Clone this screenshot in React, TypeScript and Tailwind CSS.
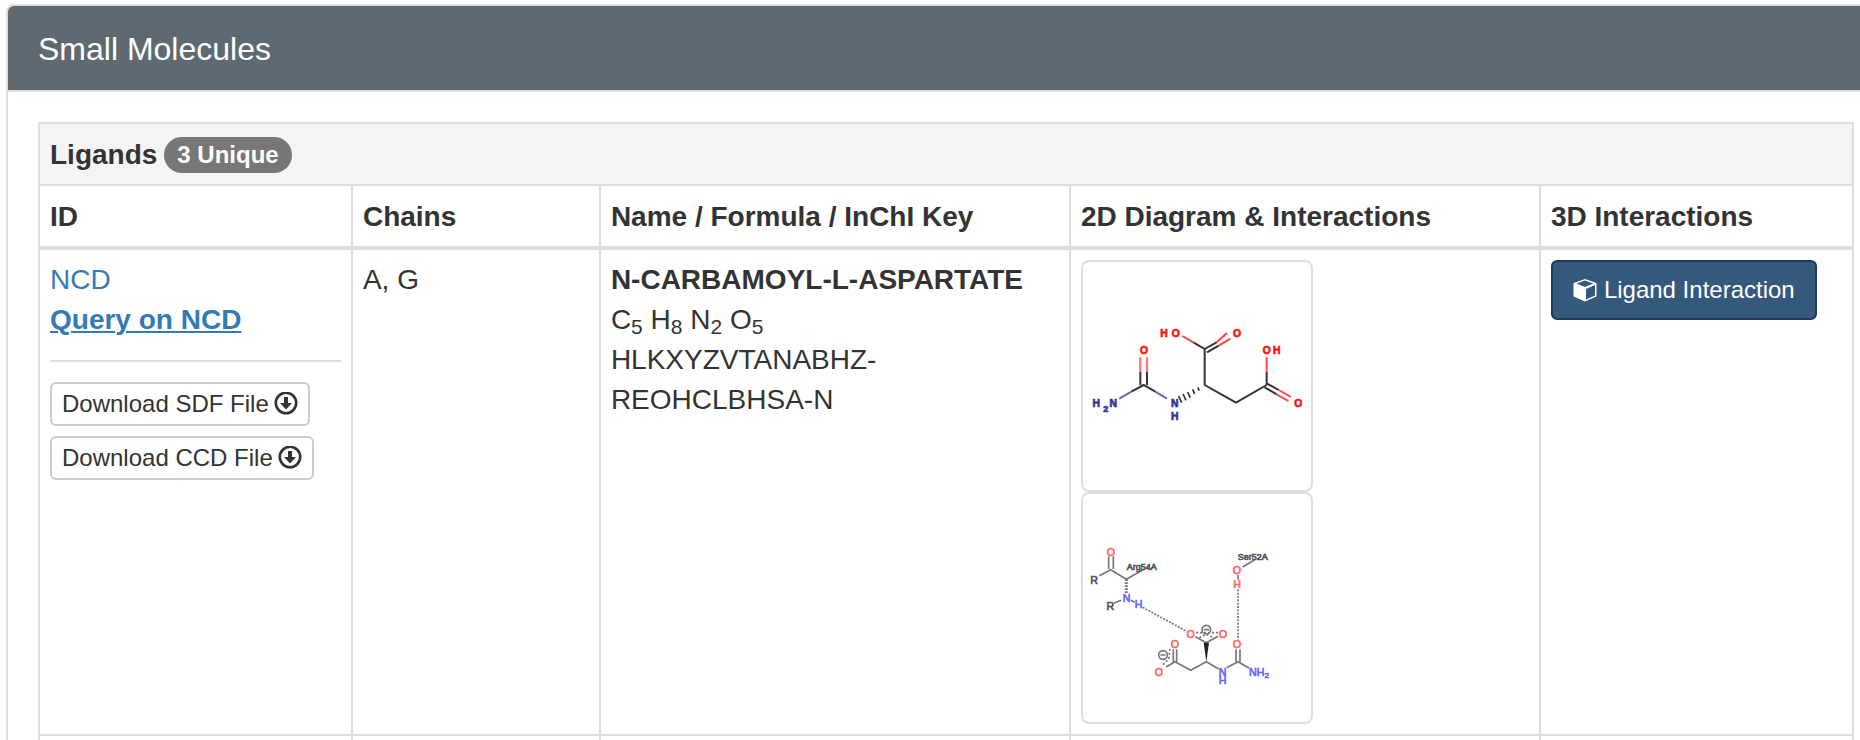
const thumb = "block w-[232px] rounded-lg border-2 border-[#ddd] bg-white";
const cell = "border-2 border-[#ddd] p-[10px] text-left align-top";
const head = "border-2 border-b-4 border-[#ddd] px-[10px] pt-[11px] pb-[9px] text-left align-top font-bold";
const stub = "border-2 border-b-0 border-[#ddd]";
const small =
  "flex h-[44px] items-center gap-[5px] rounded-md border-2 border-[#ccc] bg-white px-[10px] text-2xl leading-[36px] whitespace-nowrap text-[#333]";

function DownloadIcon() {
  return (
    <svg viewBox="0 0 24 24" className="size-6 shrink-0" aria-hidden="true">
      <circle cx="12" cy="11" r="10.200" fill="none" stroke="#333" strokeWidth="2.600" />
      <path d="M10 5h4v6h4l-6 6.500l-6-6.500h4z" fill="#333" />
    </svg>
  );
}

function CubeIcon() {
  return (
    <svg viewBox="0 0 24 24" className="size-6 shrink-0" aria-hidden="true">
      <path
        fill="#fff"
        fillRule="evenodd"
        d="M12 1L23.500 5V18.500L12 23.500L.500 18.500V5ZM12 2.600L3.500 5.500L12 9L20.500 5.500ZM13 11V21.500L22 17.500V7Z"
      />
    </svg>
  );
}

function Carbamoylaspartate() {
  return (
    <svg viewBox="39 36 684 684" className="block w-full" role="img" aria-label="2D diagram of NCD">
      <g fill="none" strokeWidth="6">
        <g stroke="#333">
          <path d="M370 277L404 297V405L498 458L590 405M404 297L440 277M411 307L446 287M184 425L221 405L256 425M211 405V365M231 405V365M590 405V365M590 400L626 420M584 412L620 433" />
          <path d="M383 412l5 10M368 418l6 14M353 426l8 17M339 432l9 19M326 438l9 20" strokeWidth="5" />
        </g>
        <path stroke="#f44" d="M337 258L370 277M440 277L471 249M446 287L481 266M590 365V322M626 420L663 441M620 433L655 453" />
        <path stroke="#f77" strokeWidth="7" d="M211 365V322M231 365V322" />
        <path stroke="#66b" d="M148 446L184 425M256 425L291 446" />
      </g>
      <g fontFamily="Liberation Sans" fontWeight="700" fontSize="31" textAnchor="middle" strokeWidth="2">
        <g fill="#f11" stroke="#f11">
          <text x="282" y="262">H</text>
          <text x="317" y="262">O</text>
          <text x="501" y="262">O</text>
          <text x="222" y="313">O</text>
          <text x="590" y="313">O</text>
          <text x="620" y="313">H</text>
          <text x="685" y="472">O</text>
        </g>
        <g fill="#339" stroke="#339">
          <text x="79" y="472">H</text>
          <text x="107" y="485" fontSize="27">2</text>
          <text x="130" y="472">N</text>
          <text x="314" y="472">N</text>
          <text x="314" y="510">H</text>
        </g>
      </g>
    </svg>
  );
}

function InteractionDiagram() {
  return (
    <svg viewBox="39 27 684 684" className="block w-full" role="img" aria-label="2D interactions of NCD">
      <g fill="none" stroke="#777" strokeWidth="5">
        <path d="M88 272L122 254L169 283L222 253M116 252V214M130 252V214M132 354L154 346M183 346L194 352M518 246L554 224M504 269V284M288 546L315 530L362 556L409 530L446 552M310 530V493M320 530V493M409 473L376 455M409 473L444 454M470 548L504 530L538 550M498 530V493M510 530V493" />
        <path d="M169 283V328" strokeWidth="9" strokeDasharray="5 4" />
        <path d="M218 367L350 439M504 313V464" strokeDasharray="6 4" />
        <path d="M378 443H444M388 458L409 448L430 458M300 492L296 522L278 540" strokeDasharray="6 6" />
        <circle cx="409" cy="434" r="13" />
        <path d="M401 434h16M271 510h16" />
        <circle cx="279" cy="510" r="13" />
      </g>
      <path d="M409 530L401 473H417Z" fill="#222" />
      <g fontFamily="Liberation Sans" fontSize="32" textAnchor="middle" strokeWidth="2">
        <g fill="#555" stroke="#555">
          <text x="72" y="297">R</text>
          <text x="121" y="374">R</text>
          <text x="215" y="255" fontSize="27">Arg54A</text>
          <text x="548" y="225" fontSize="27">Ser52A</text>
        </g>
        <g fill="#f66" stroke="#f66">
          <text x="123" y="213">O</text>
          <text x="501" y="267">O</text>
          <text x="501" y="309">H</text>
          <text x="362" y="458">O</text>
          <text x="459" y="458">O</text>
          <text x="315" y="489">O</text>
          <text x="267" y="573">O</text>
          <text x="501" y="489">O</text>
        </g>
        <g fill="#66f" stroke="#66f">
          <text x="170" y="352">N</text>
          <text x="206" y="369">H</text>
          <text x="458" y="573">
            N<tspan x="458" dy="25">H</tspan>
          </text>
          <text x="567" y="574">
            NH<tspan dy="5" fontSize="24">2</tspan>
          </text>
        </g>
      </g>
    </svg>
  );
}

export default function App() {
  return (
    <main className="min-h-screen overflow-hidden bg-white pt-1 pl-[6px] font-['Liberation_Sans',Arial,sans-serif] text-[28px] leading-[40px] text-[#333]">
      <section className="-mr-[26px] rounded-t-lg border-2 border-b-0 border-[#ddd]">
        <header className="rounded-t-md border-b-2 border-[#ddd] bg-[#5f6972] px-[30px] pt-[21px] pb-[19px]">
          <h3 className="text-[32px] leading-[44px] text-white">Small Molecules</h3>
        </header>
        <div className="px-[30px] pt-[30px]">
          <table className="w-full table-fixed border-collapse">
            <colgroup>
              <col className="w-[17.25%]" />
              <col className="w-[13.67%]" />
              <col className="w-[25.91%]" />
              <col className="w-[25.91%]" />
              <col />
            </colgroup>
            <thead>
              <tr>
                <th colSpan={5} className="border-2 border-[#ddd] bg-[#f4f4f4] px-[10px] pt-[11px] pb-[9px] text-left font-bold">
                  <span className="flex items-center gap-[7px]">
                    Ligands
                    <span className="flex h-9 items-center rounded-full bg-[#777] px-[13px] text-2xl text-white">3 Unique</span>
                  </span>
                </th>
              </tr>
              <tr>
                <th className={head}>ID</th>
                <th className={head}>Chains</th>
                <th className={head}>Name / Formula / InChI Key</th>
                <th className={head}>2D Diagram &amp; Interactions</th>
                <th className={head}>3D Interactions</th>
              </tr>
            </thead>
            <tbody>
              <tr>
                <td className={cell}>
                  <a href="#ncd" className="block text-[#337ab7]">NCD</a>
                  <a href="#query" className="block font-bold text-[#337ab7] underline decoration-2 underline-offset-2">Query on NCD</a>
                  <hr className="my-[20px] border-t-2 border-[#ddd]" />
                  <div className="flex flex-col items-start gap-[10px]">
                    <button type="button" className={small}>Download SDF File <DownloadIcon /></button>
                    <button type="button" className={small}>Download CCD File <DownloadIcon /></button>
                  </div>
                </td>
                <td className={cell}>A, G</td>
                <td className={cell}>
                  <div className="font-bold">N-CARBAMOYL-L-ASPARTATE</div>
                  <div>
                    C<sub className="text-[75%]">5</sub> H<sub className="text-[75%]">8</sub> N<sub className="text-[75%]">2</sub> O<sub className="text-[75%]">5</sub>
                  </div>
                  <div>HLKXYZVTANABHZ-<wbr />REOHCLBHSA-N</div>
                </td>
                <td className={cell}>
                  <a href="#diagram" className={thumb}><Carbamoylaspartate /></a>
                  <a href="#interactions" className={thumb}><InteractionDiagram /></a>
                </td>
                <td className={cell}>
                  <button type="button" className="flex items-center gap-[7px] rounded-md border-2 border-[#1d3a5a] bg-[#34597d] px-[20px] py-[10px] text-2xl leading-[36px] whitespace-nowrap text-white">
                    <CubeIcon /> Ligand Interaction
                  </button>
                </td>
              </tr>
              <tr className="h-[5px]">
                <td className={stub} />
                <td className={stub} />
                <td className={stub} />
                <td className={stub} />
                <td className={stub} />
              </tr>
            </tbody>
          </table>
        </div>
      </section>
    </main>
  );
}
